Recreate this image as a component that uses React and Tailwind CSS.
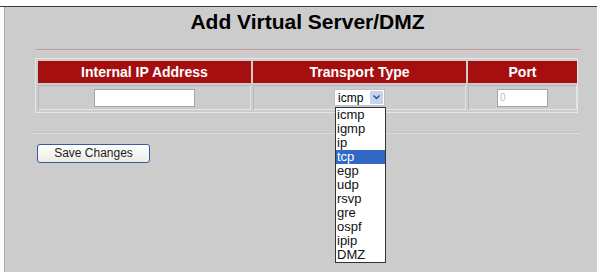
import React from "react";

const items = ["icmp", "igmp", "ip", "tcp", "egp", "udp", "rsvp", "gre", "ospf", "ipip", "DMZ"];

export default function App() {
  return (
    <div className="relative w-[604px] h-[279px] bg-white overflow-hidden" style={{ fontFamily: '"Liberation Sans", Arial, sans-serif' }}>
      <div className="w-[597px] mt-[6px] border-t border-[#3a3a3a]">
        <div className="ml-[4px] h-[265px] bg-[#cccccc] border-l border-[#a8a8a8] flex flex-col">
          <div className="h-[30px] pl-[13px] flex items-center justify-center text-[21px] font-bold text-black">
            Add Virtual Server/DMZ
          </div>
          <div className="ml-[31px] mr-[17px] mt-[12px] h-[2px] bg-[#c49a9a] border-b border-[#dcc]" />
          <div className="ml-[30px] mt-[7px] w-[543px] border border-[#e6e6e6] p-[2px] flex flex-col gap-[2px]">
            <div className="grid grid-cols-[213px_213px_109px] gap-[2px]">
              <div className="h-[22px] bg-[#a50f0f] text-white font-bold text-[14px] flex items-center justify-center">Internal IP Address</div>
              <div className="h-[22px] bg-[#a50f0f] text-white font-bold text-[14px] flex items-center justify-center">Transport Type</div>
              <div className="h-[22px] bg-[#a50f0f] text-white font-bold text-[14px] flex items-center justify-center">Port</div>
            </div>
            <div className="grid grid-cols-[213px_213px_109px] gap-[2px]">
              <div className="h-[25px] border border-[#e4e4e4] border-t-[#b8b8b8] border-l-[#b8b8b8] flex items-center justify-center">
                <div className="w-[101px] h-[18px] bg-white border border-[#9aa] " />
              </div>
              <div className="h-[25px] border border-[#e4e4e4] border-t-[#b8b8b8] border-l-[#b8b8b8] flex items-center justify-center">
                <div className="w-[51px] h-[17px] bg-white border border-[#b8c0cc] flex items-center justify-between pl-[3px] pr-[1px] text-[12px] text-black">
                  <span>icmp</span>
                  <span className="w-[13px] h-[13px] bg-[#c6d4ee] flex items-center justify-center">
                    <svg width="7" height="5" viewBox="0 0 7 5"><path d="M0.5 0.5 L3.5 3.5 L6.5 0.5" stroke="#2b4a9a" strokeWidth="1.4" fill="none" /></svg>
                  </span>
                </div>
              </div>
              <div className="h-[25px] border border-[#e4e4e4] border-t-[#b8b8b8] border-l-[#b8b8b8] flex items-center justify-center">
                <div className="w-[51px] h-[18px] bg-white border border-[#9aa] text-[10px] text-[#bbb] pl-[2px] leading-[16px]">0</div>
              </div>
            </div>
          </div>
          <div className="ml-[27px] mr-[17px] mt-[19px] h-[2px] bg-[#c4c4c4] border-b border-[#dedede]" />
          <div className="ml-[32px] mt-[6px]">
            <button className="w-[113px] h-[19px] rounded-[3px] border border-[#3b5b9c] bg-gradient-to-b from-white to-[#ecebe6] text-[12px] text-[#222] leading-[16px]">
              Save Changes
            </button>
          </div>
        </div>
      </div>
      <div className="absolute left-[335px] top-[107px] w-[51px] bg-white border border-[#333] text-[13px] text-[#111]">
        {items.map((it) => (
          <div key={it} className={"h-[14px] leading-[14px] pl-[1px] " + (it === "tcp" ? "bg-[#3168c4] text-white" : "")}>{it}</div>
        ))}
      </div>
    </div>
  );
}
